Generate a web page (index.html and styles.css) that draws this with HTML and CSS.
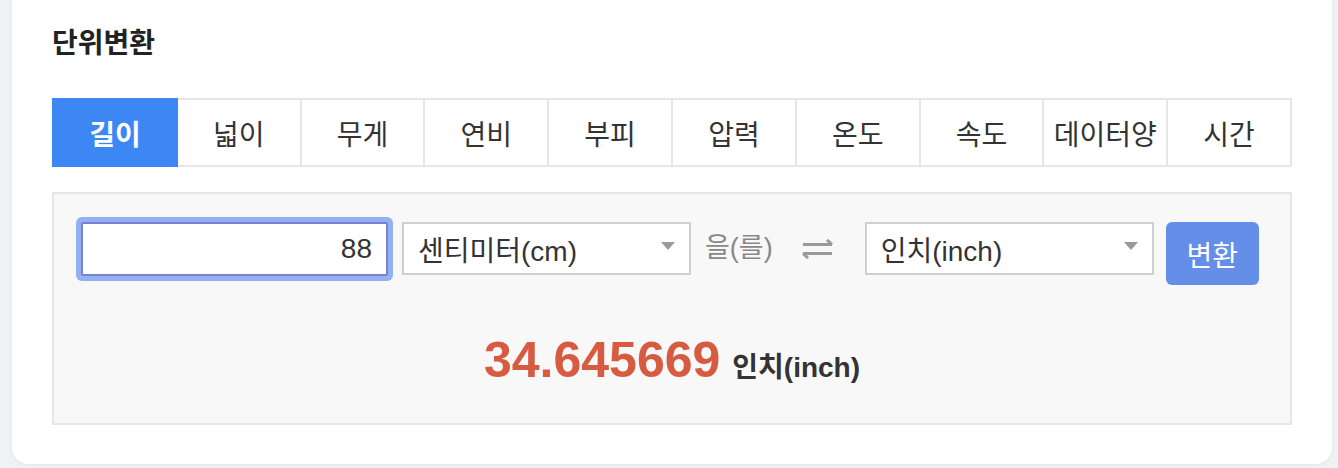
FILE: index.html
```html
<!DOCTYPE html>
<html lang="ko">
<head>
    <meta charset="UTF-8">
    <meta name="viewport" content="width=device-width, initial-scale=1.0">
    <title>단위변환</title>
    <link rel="stylesheet" href="styles.css">
</head>
<body>
    <section class="card">
        <h2 class="card-title">단위변환</h2>

        <ul class="tabs">
            <li class="tab active">길이</li>
            <li class="tab">넓이</li>
            <li class="tab">무게</li>
            <li class="tab">연비</li>
            <li class="tab">부피</li>
            <li class="tab">압력</li>
            <li class="tab">온도</li>
            <li class="tab">속도</li>
            <li class="tab">데이터양</li>
            <li class="tab">시간</li>
        </ul>

        <div class="converter">
            <form class="conv-row" name="convert">
                <input class="amount" type="text" name="amount" value="88">
                <div class="select">
                    <span>센티미터(cm)</span>
                    <svg class="caret" width="14" height="8" viewBox="0 0 14 8"><path d="M0 0h14L7 8z" fill="#999"/></svg>
                </div>
                <span class="josa">을(를)</span>
                <svg class="swap" width="33" height="20" viewBox="0 0 33 20">
                    <path d="M1 5.5h29M25 1l5 4.5M1 14.5h29M1 14.5L6 19" stroke="#9a9a9a" stroke-width="3" fill="none"/>
                </svg>
                <div class="select">
                    <span>인치(inch)</span>
                    <svg class="caret" width="14" height="8" viewBox="0 0 14 8"><path d="M0 0h14L7 8z" fill="#999"/></svg>
                </div>
                <button class="btn" type="button">변환</button>
            </form>

            <div class="result">
                <strong class="result-num">34.645669</strong>
                <span class="result-unit">인치(inch)</span>
            </div>
        </div>
    </section>
</body>
</html>
```

FILE: styles.css
```css
body {
    margin: 0;
    background-color: #f0f1f5;
    font-family: "Liberation Sans", "Noto Sans CJK KR", sans-serif;
    color: #333;
}

.card {
    margin: 0 6px 2px 12px;
    padding: 28px 40px 39px;
    background: #fff;
    border-radius: 0 0 16px 16px;
    box-shadow: 0 1px 3px rgba(0, 0, 0, 0.06);
}

.card-title {
    margin: 0 0 38px;
    font-size: 28px;
    line-height: 32px;
    font-weight: bold;
    color: #222;
}

.tabs {
    display: grid;
    grid-template-columns: repeat(10, 1fr);
    margin: 0;
    padding: 0;
    list-style: none;
    border-top: 2px solid #e6e6e6;
    border-left: 2px solid #e6e6e6;
}

.tab {
    height: 65px;
    display: flex;
    align-items: center;
    justify-content: center;
    font-size: 28px;
    color: #333;
    border-right: 2px solid #e6e6e6;
    border-bottom: 2px solid #e6e6e6;
}

.tab.active {
    background: #3d87f5;
    color: #fff;
    font-weight: bold;
    margin: -2px 0 0 -2px;
    height: 69px;
    border: none;
}

.converter {
    margin-top: 25px;
    padding: 28px 27px 38px;
    background: #f8f8f8;
    border: 2px solid #e6e6e6;
}

.conv-row {
    display: flex;
    align-items: flex-start;
}

.conv-row > * {
    flex-shrink: 0;
}

.amount {
    box-sizing: border-box;
    width: 307px;
    height: 54px;
    margin: 0;
    padding: 0 14px;
    border: 2px solid #7a80d8;
    border-radius: 2px;
    box-shadow: 0 0 0 5px #93b1f0;
    outline: none;
    background: #fff;
    text-align: right;
    font-family: inherit;
    font-size: 28px;
    color: #333;
}

.select {
    box-sizing: border-box;
    width: 289px;
    height: 53px;
    margin-left: 14px;
    padding: 0 14px;
    display: flex;
    align-items: center;
    justify-content: space-between;
    background: #fff;
    border: 2px solid #cfcfcf;
    font-size: 28px;
    color: #333;
}

.swap + .select {
    margin-left: 30px;
}

.caret {
    margin-top: -6px;
}

.josa {
    margin-left: 14px;
    line-height: 53px;
    font-size: 27px;
    color: #888;
    white-space: nowrap;
}

.swap {
    margin: 17px 0 0 29px;
}

.btn {
    width: 93px;
    height: 63px;
    margin-left: 12px;
    border: none;
    border-radius: 6px;
    background: #648ee8;
    color: #fff;
    font-family: inherit;
    font-size: 28px;
}

.result {
    margin-top: 50px;
    display: flex;
    justify-content: center;
    align-items: baseline;
    gap: 12px;
}

.result-num {
    font-size: 50px;
    line-height: 50px;
    color: #d65b40;
}

.result-unit {
    font-size: 28px;
    font-weight: bold;
    color: #333;
}
```
